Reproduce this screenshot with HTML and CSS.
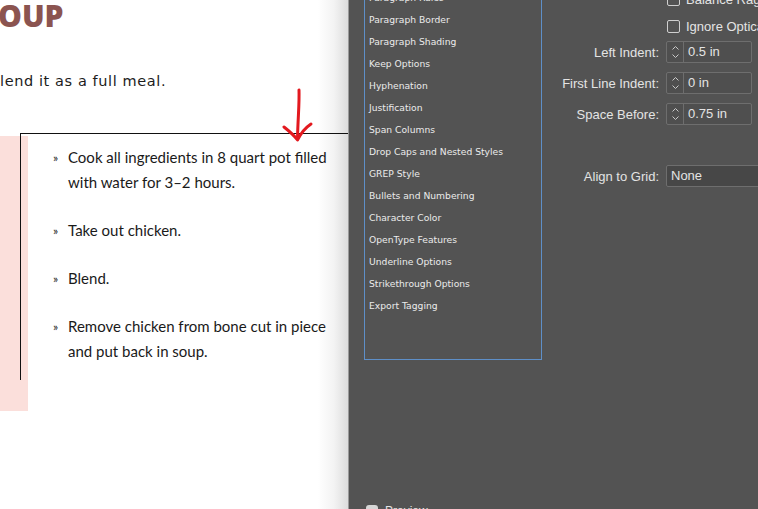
FILE: index.html
```html
<!DOCTYPE html>
<html lang="en">
<head>
  <meta charset="UTF-8" />
  <meta name="viewport" content="width=device-width, initial-scale=1.0"/>
  <title>Paragraph Style Options</title>
  <link rel="stylesheet" href="styles.css">
</head>
<body>
  <div class="doc">
    <h1 class="title">OUP</h1>
    <p class="intro">lend it as a full meal.</p>

    <div class="recipe">
      <div class="frame">
        <ul class="steps">
          <li><span class="bullet">»</span><span>Cook all ingredients in 8 quart pot filled with water for 3–2 hours.</span></li>
          <li><span class="bullet">»</span><span>Take out chicken.</span></li>
          <li><span class="bullet">»</span><span>Blend.</span></li>
          <li><span class="bullet">»</span><span>Remove chicken from bone cut in piece and put back in soup.</span></li>
        </ul>
      </div>
    </div>

    <svg class="arrow" width="32" height="56" viewBox="0 0 32 56">
      <path d="M17 3 C17.5 16 16 30 15.5 51" fill="none" stroke="#e3191f" stroke-width="3" stroke-linecap="round"/>
      <path d="M2 40 C7 44 12 48 15.5 53 C19 46 23 41 29 37" fill="none" stroke="#e3191f" stroke-width="3" stroke-linecap="round" stroke-linejoin="round"/>
    </svg>
  </div>

  <div class="dialog">
    <div class="side">
      <ul class="categories">
        <li>Paragraph Rules</li>
        <li>Paragraph Border</li>
        <li>Paragraph Shading</li>
        <li>Keep Options</li>
        <li>Hyphenation</li>
        <li>Justification</li>
        <li>Span Columns</li>
        <li>Drop Caps and Nested Styles</li>
        <li>GREP Style</li>
        <li>Bullets and Numbering</li>
        <li>Character Color</li>
        <li>OpenType Features</li>
        <li>Underline Options</li>
        <li>Strikethrough Options</li>
        <li>Export Tagging</li>
      </ul>
      <label class="preview"><span class="preview-box"></span>Preview</label>
    </div>

    <div class="fields">
      <div class="row check-row">
        <span class="label"></span>
        <span class="check"><span class="box"></span>Balance Ragged Lines</span>
      </div>
      <div class="row check-row">
        <span class="label"></span>
        <span class="check"><span class="box"></span>Ignore Optical Margin</span>
      </div>
      <div class="row field-row">
        <span class="label">Left Indent:</span>
        <div class="spin">
          <span class="spin-btns">
            <svg width="9" height="18" viewBox="0 0 9 18"><path d="M1.5 6.5 L4.5 3.5 L7.5 6.5 M1.5 11.5 L4.5 14.5 L7.5 11.5" fill="none" stroke="#c9c9c9" stroke-width="1"/></svg>
          </span>
          <span class="spin-value">0.5 in</span>
        </div>
      </div>
      <div class="row field-row">
        <span class="label">First Line Indent:</span>
        <div class="spin">
          <span class="spin-btns">
            <svg width="9" height="18" viewBox="0 0 9 18"><path d="M1.5 6.5 L4.5 3.5 L7.5 6.5 M1.5 11.5 L4.5 14.5 L7.5 11.5" fill="none" stroke="#c9c9c9" stroke-width="1"/></svg>
          </span>
          <span class="spin-value">0 in</span>
        </div>
      </div>
      <div class="row field-row">
        <span class="label">Space Before:</span>
        <div class="spin">
          <span class="spin-btns">
            <svg width="9" height="18" viewBox="0 0 9 18"><path d="M1.5 6.5 L4.5 3.5 L7.5 6.5 M1.5 11.5 L4.5 14.5 L7.5 11.5" fill="none" stroke="#c9c9c9" stroke-width="1"/></svg>
          </span>
          <span class="spin-value">0.75 in</span>
        </div>
      </div>
      <div class="row grid-row">
        <span class="label">Align to Grid:</span>
        <div class="select">None</div>
      </div>
    </div>
  </div>
</body>
</html>
```

FILE: styles.css
```css
body {
  margin: 0;
  width: 758px;
  height: 509px;
  overflow: hidden;
  display: flex;
  font-family: "Liberation Sans", Arial, sans-serif;
}
.doc {
  position: relative;
  width: 348px;
  flex-shrink: 0;
  border-right: 1px solid #9a9a9a;
  background: linear-gradient(to right, #fff 318px, #f3f3f3 334px, #dcdcdc);
}
.title {
  margin: 0;
  padding-top: 1px;
  font-family: "Open Sans", sans-serif;
  font-weight: 800;
  font-size: 30px;
  line-height: 30px;
  color: #8b5450;
  margin-left: -2px;
}
.intro {
  margin: 41px 0 0;
  font-family: "DejaVu Sans", sans-serif;
  font-size: 14.5px;
  letter-spacing: 0.6px;
  line-height: 18px;
  color: #1c1c1c;
}
.recipe {
  margin-top: 43px;
  height: 278px;
  background: linear-gradient(#fbdfdb, #fbdfdb) no-repeat 0 3px / 28px 275px;
}
.frame {
  margin-left: 20px;
  height: 246px;
  border-top: 1.5px solid #111;
  border-left: 1.5px solid #111;
}
.steps {
  list-style: none;
  margin: 0;
  padding: 11px 0 0 32px;
  font-family: Lato, sans-serif;
  font-size: 15px;
  line-height: 25px;
  color: #1a1a1a;
}
.steps li {
  display: flex;
  margin-bottom: 23px;
}
.bullet {
  width: 15px;
  flex-shrink: 0;
  font-size: 12px;
}
.arrow {
  position: absolute;
  left: 282px;
  top: 87px;
}

.dialog {
  flex: 1;
  display: flex;
  background: #535353;
  color: #e4e4e4;
  padding-left: 15px;
}
.side {
  width: 178px;
  display: flex;
  flex-direction: column;
}
.categories {
  list-style: none;
  margin: -14px 0 0;
  padding: 0 0 0 4px;
  height: 372px;
  border: 1px solid #5e8fc8;
  font-family: "DejaVu Sans", sans-serif;
  font-size: 9.2px;
  line-height: 22px;
  color: #ebebeb;
}
.preview {
  margin-top: auto;
  margin-bottom: -9px;
  display: flex;
  align-items: center;
  gap: 7px;
  padding-left: 2px;
  font-size: 12px;
}
.preview-box {
  width: 12px;
  height: 12px;
  border-radius: 3px;
  background: #d6d6d6;
}
.fields {
  margin-top: -12px;
  margin-left: 8px;
  display: flex;
  flex-direction: column;
  gap: 9px;
  font-size: 13px;
  white-space: nowrap;
}
.row {
  display: flex;
  align-items: center;
  height: 22px;
  gap: 7px;
}
.check-row + .check-row {
  margin-top: -4px;
}
.check-row + .field-row {
  margin-top: -5px;
}
.grid-row {
  margin-top: 31px;
}
.label {
  width: 109px;
  flex-shrink: 0;
  text-align: right;
}
.check {
  display: flex;
  align-items: center;
  gap: 6px;
  padding-left: 1px;
}
.box {
  width: 11px;
  height: 11px;
  border: 1px solid #cfcfcf;
  border-radius: 2px;
}
.spin {
  display: flex;
  width: 84px;
  height: 20px;
  border: 1px solid #6e6e6e;
  border-radius: 2px;
  background: #4f4f4f;
}
.spin-btns {
  width: 16px;
  display: flex;
  align-items: center;
  justify-content: center;
  border-right: 1px solid #6e6e6e;
}
.spin-value {
  padding-left: 4px;
  line-height: 20px;
}
.select {
  width: 120px;
  height: 20px;
  line-height: 20px;
  padding-left: 4px;
  border: 1px solid #6e6e6e;
  border-radius: 2px;
  background: #474747;
}
```
